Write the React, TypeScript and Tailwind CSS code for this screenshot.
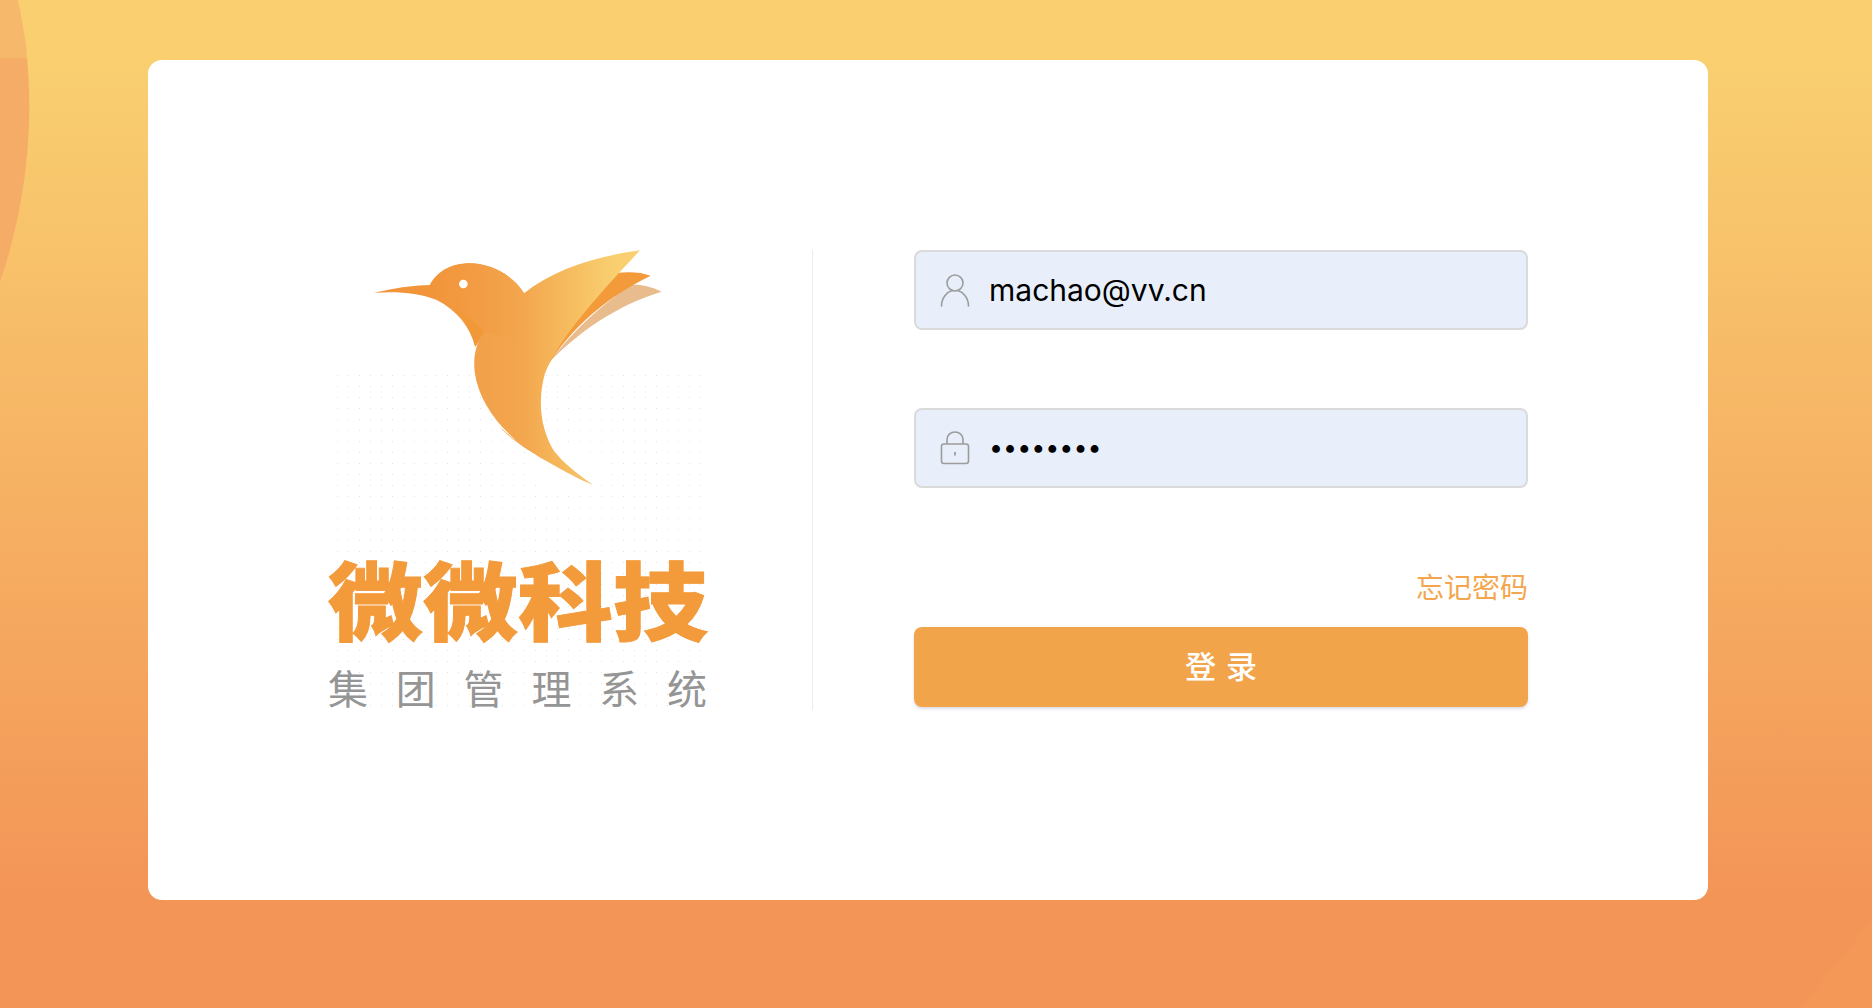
const Bird = () => (
  <svg viewBox="84 60 1137 870" className="relative block h-[290px] w-[379px]">
    <defs>
      <linearGradient id="bodyFill" gradientUnits="userSpaceOnUse" x1="520" y1="0" x2="1000" y2="0">
        <stop offset="0" stopColor="#F2A049" />
        <stop offset="0.3" stopColor="#F3A64D" />
        <stop offset="0.6" stopColor="#F6BC5F" />
        <stop offset="0.88" stopColor="#F9CF70" />
      </linearGradient>
      <linearGradient id="headFill" gradientUnits="userSpaceOnUse" x1="400" y1="0" x2="660" y2="0">
        <stop offset="0" stopColor="#F2953A" />
        <stop offset="0.5" stopColor="#F29C44" />
        <stop offset="1" stopColor="#F3A64D" />
      </linearGradient>
      <radialGradient id="dotFade" cx="0.5" cy="0.5" r="0.5">
        <stop offset="0.75" stopColor="#fff" />
        <stop offset="1" stopColor="#fff" stopOpacity="0" />
      </radialGradient>
    </defs>
    <ellipse cx="800" cy="720" rx="130" ry="70" fill="url(#dotFade)" />
    {/* back feathers */}
    <path d="M1085 185 C1050 168 1020 162 990 165 C900 230 820 300 745 400 C830 310 950 225 1085 185Z" fill="#E9BC8E" />
    <path d="M1052 137 C1020 126 985 124 945 130 C860 210 780 300 730 430 C790 320 900 210 1052 137Z" fill="#F39A3A" />
    {/* body and wing */}
    <path
      d="M1020 61 C880 80 760 120 672 190 C640 135 570 100 510 100 C455 100 410 125 390 165 L550 308 C525 345 520 385 524 425 C535 510 590 585 670 650 C740 695 810 735 880 765 C830 730 790 700 760 660 C725 600 710 520 735 430 C775 330 880 210 1020 61Z"
      fill="url(#bodyFill)"
    />
    {/* head */}
    <path
      d="M222 189 C280 175 335 166 390 165 C410 125 455 100 510 100 C570 100 640 135 672 190 L640 330 L552 305 L525 350 C510 290 470 240 410 210 C350 188 290 184 222 189Z"
      fill="url(#headFill)"
    />
    <path d="M470 240 C510 262 535 285 552 305 L527 350 C515 310 500 275 470 240Z" fill="#F19838" />
    {/* belly edge */}
    <path d="M600 590 C625 620 650 635 670 650 C740 695 810 735 880 765 C820 738 770 712 720 680 C670 650 635 625 600 590Z" fill="#F19838" />
    <circle cx="490" cy="162" r="13" fill="#fff" />
  </svg>
);

const UserIcon = () => (
  <svg width="30" height="34" viewBox="0 0 30 34" fill="none" stroke="#9C9C9C" strokeWidth="1.6" className="shrink-0">
    <circle cx="15" cy="10" r="8" />
    <path d="M1.5 33 C1.5 25 7 19 12 17.5 M28.5 33 C28.5 25 23 19 18 17.5" strokeLinecap="round" />
  </svg>
);

const LockIcon = () => (
  <svg width="30" height="34" viewBox="0 0 30 34" fill="none" stroke="#9C9C9C" strokeWidth="1.6" className="shrink-0">
    <rect x="1.5" y="13" width="27" height="19.5" rx="2.5" />
    <path d="M7 13 V8.5 a8 7.5 0 0 1 16 0 V13" />
    <path d="M15 21 v3.5" strokeWidth="1.8" />
  </svg>
);

const fieldClass =
  "flex h-[80px] items-center rounded-lg border-2 border-[#DADADA] bg-[#E8EFFB] pl-[24px]";

export default function App() {
  return (
    <div className="relative h-screen w-full overflow-hidden bg-[linear-gradient(180deg,#F9CF70_6%,#F39557_89%)] pl-[148px] pt-[60px] font-['Inter','Noto_Sans_CJK_SC',sans-serif]">
      {/* background shapes */}
      <svg className="absolute left-0 top-0" width="40" height="290" viewBox="0 0 40 290">
        <path d="M0 0 H18 C22 20 26 40 27 58 H0Z" fill="#F6B96B" />
        <path d="M0 58 H27 C32 110 31 190 0 282Z" fill="#F4AC67" />
      </svg>
      <svg className="absolute bottom-0 right-0" width="72" height="88" viewBox="0 0 72 88">
        <path d="M72 0 V88 H0Z" fill="#F39857" />
      </svg>

      <div className="relative flex h-[840px] w-[1560px] items-start rounded-[14px] bg-white pt-[190px]">
        {/* logo column */}
        <div className="flex h-[460px] w-[665px] border-r border-[#EDEDED] pl-[180px]">
          <div className="relative w-[379px]">
            <div className="absolute inset-x-[4px] bottom-0 top-[120px] bg-[radial-gradient(#E2E2E2_0.7px,transparent_1px)] bg-[length:11px_11px]" />
            <Bird />
            <div className="relative mt-[15px] scale-y-90 whitespace-nowrap text-[95px] font-black leading-[95px] text-[#F39A3A] [-webkit-text-stroke:1px_#F39A3A]">
              微微科技
            </div>
            <div className="relative mt-[16px] flex justify-between text-[40px] font-normal leading-[48px] text-[#959595]">
              <span>集</span>
              <span>团</span>
              <span>管</span>
              <span>理</span>
              <span>系</span>
              <span>统</span>
            </div>
          </div>
        </div>

        {/* form column */}
        <div className="ml-[101px] flex w-[614px] flex-col">
          <div className={fieldClass}>
            <UserIcon />
            <input
              readOnly
              value="machao@vv.cn"
              className="ml-[19px] min-w-0 flex-1 bg-transparent text-[30px] text-black outline-none"
            />
          </div>
          <div className={`${fieldClass} mt-[78px]`}>
            <LockIcon />
            <input
              readOnly
              type="password"
              value="12345678"
              className="ml-[19px] min-w-0 flex-1 bg-transparent text-[25px] text-black outline-none"
            />
          </div>
          <a className="mt-[82px] self-end text-[28px] leading-[36px] text-[#F3A64E]">忘记密码</a>
          <button className="mt-[21px] h-[80px] rounded-lg bg-[#F2A44A] pl-[10px] text-[31px] font-medium tracking-[10px] text-white shadow-[0_2px_3px_rgba(120,120,180,0.25)]">
            登录
          </button>
        </div>
      </div>
    </div>
  );
}
